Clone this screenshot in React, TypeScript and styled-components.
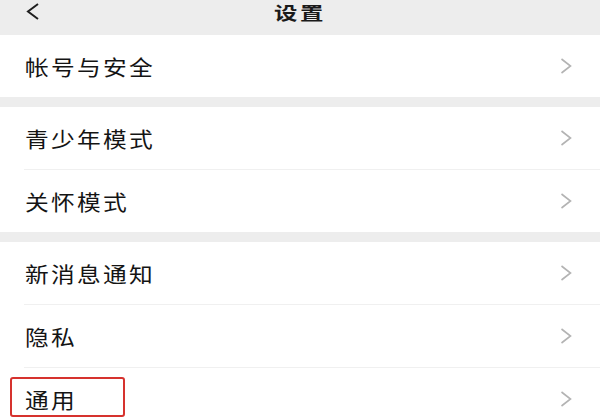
import styled, { createGlobalStyle } from 'styled-components';

const GlobalStyle = createGlobalStyle`
  html, body {
    margin: 0;
    padding: 0;
    background: #ededed;
  }
  body {
    font-family: "Noto Sans CJK SC", "Noto Sans", sans-serif;
    overflow: hidden;
  }
`;

const Page = styled.div`
  width: 600px;
  height: 420px;
  overflow: hidden;
  background: #ededed;
`;

const Header = styled.div`
  position: relative;
  height: 35px;
  display: flex;
  justify-content: center;
  align-items: flex-start;
  padding-top: 1px;
  box-sizing: border-box;
`;

const BackButton = styled.div`
  position: absolute;
  left: 24px;
  top: 2px;
  width: 18px;
  height: 18px;
  display: flex;
  align-items: center;
  justify-content: center;
`;

// the screenshot is stretched sideways, so glyphs get a small scaleX
const Title = styled.div`
  height: 22px;
  line-height: 22px;
  font-size: 18px;
  font-weight: 700;
  letter-spacing: 2px;
  color: #1a1a1a;
  transform: scaleX(1.3);
`;

const Group = styled.div`
  background: #fff;
  margin-bottom: 10px;
`;

const Row = styled.div<{ $last?: boolean }>`
  position: relative;
  height: 62px;
  display: flex;
  align-items: center;
  justify-content: space-between;
  padding: 0 28px 0 25px;
  box-sizing: border-box;

  &::after {
    content: '';
    display: ${(p) => (p.$last ? 'none' : 'block')};
    position: absolute;
    left: 24px;
    right: 0;
    bottom: -1px;
    height: 1px;
    background: #f0f0f0;
  }
  & + & {
    margin-top: 1px;
  }
`;

const Label = styled.span`
  font-size: 21px;
  font-weight: 400;
  letter-spacing: 2px;
  color: #141414;
  transform: scaleX(1.13);
  transform-origin: left center;
`;

const Highlight = styled.div`
  position: absolute;
  left: 10px;
  top: 9px;
  width: 115px;
  height: 40px;
  border: 2px solid #d6322e;
  border-radius: 3px;
  box-sizing: border-box;
  pointer-events: none;
`;

function Chevron() {
  return (
    <svg width="12" height="16" viewBox="0 0 12 16">
      <path d="M1.5 1 L10.5 8 L1.5 15" fill="none" stroke="#b3b3b3" strokeWidth="1.6" />
    </svg>
  );
}

const GROUPS: { label: string; marked?: boolean }[][] = [
  [{ label: '帐号与安全' }],
  [{ label: '青少年模式' }, { label: '关怀模式' }],
  [{ label: '新消息通知' }, { label: '隐私' }, { label: '通用', marked: true }],
];

export default function App() {
  return (
    <Page>
      <GlobalStyle />
      <Header>
        <BackButton>
          <svg width="14" height="17" viewBox="0 0 14 17">
            <path d="M12 1 L2 8.5 L12 16" fill="none" stroke="#1f1f1f" strokeWidth="2" />
          </svg>
        </BackButton>
        <Title>设置</Title>
      </Header>
      {GROUPS.map((group, gi) => (
        <Group key={gi}>
          {group.map((item, i) => (
            <Row key={item.label} $last={i === group.length - 1}>
              <Label>{item.label}</Label>
              <Chevron />
              {item.marked && <Highlight />}
            </Row>
          ))}
        </Group>
      ))}
    </Page>
  );
}
